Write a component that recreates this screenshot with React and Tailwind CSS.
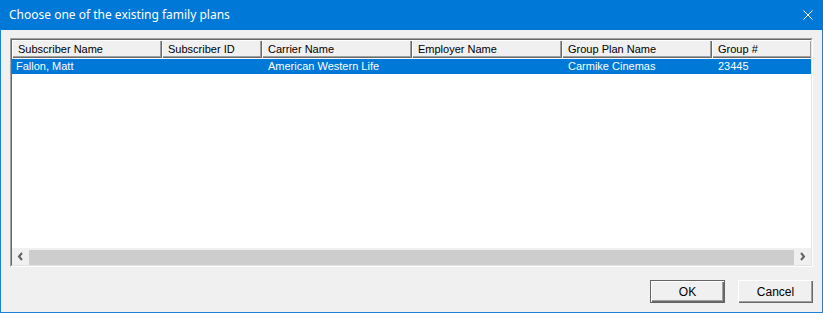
import React from "react";

const cols = [
  { name: "Subscriber Name", w: "w-[150px]" },
  { name: "Subscriber ID", w: "w-[100px]" },
  { name: "Carrier Name", w: "w-[150px]" },
  { name: "Employer Name", w: "w-[150px]" },
  { name: "Group Plan Name", w: "w-[150px]" },
  { name: "Group #", w: "w-[100px]" },
];

const row = ["Fallon, Matt", "", "American Western Life", "", "Carmike Cinemas", "23445"];

export default function App() {
  return (
    <div className="w-[823px] h-[313px] flex flex-col bg-[#f0f0f0] overflow-hidden" style={{ fontFamily: '"Liberation Sans", Arial, sans-serif' }}>
      {/* Title bar */}
      <div className="h-[30px] shrink-0 bg-[#0078d7] flex items-center justify-between pl-[9px] pr-[10px]">
        <span className="text-white text-[12px] leading-none pb-[1px]" style={{ fontFamily: '"Noto Sans", sans-serif' }}>
          Choose one of the existing family plans
        </span>
        <svg width="10" height="10" viewBox="0 0 10 10" className="mr-[0px]">
          <path d="M0.5 0.5 L9.5 9.5 M9.5 0.5 L0.5 9.5" stroke="white" strokeWidth="1" fill="none" />
        </svg>
      </div>

      {/* Body */}
      <div className="flex-1 flex flex-col border-x border-b border-[#1a82d6] pt-[8px] px-[9px] pb-[9px]">
        {/* List box sunken border */}
        <div className="h-[229px] border border-t-[#a0a0a0] border-l-[#a0a0a0] border-r-white border-b-white">
          <div className="h-full border border-t-[#696969] border-l-[#696969] border-r-[#e3e3e3] border-b-[#e3e3e3] bg-white flex flex-col overflow-hidden">
            {/* Header */}
            <div className="flex h-[18px] shrink-0 overflow-hidden">
              {cols.map((c) => (
                <div
                  key={c.name}
                  className={`${c.w} shrink-0 h-full bg-[#f0f0f0] text-[11px] text-black leading-[18px] pl-[6px] shadow-[inset_1px_1px_0_#ffffff,inset_-1px_-1px_0_#696969,inset_-2px_-2px_0_#a0a0a0]`}
                >
                  {c.name}
                </div>
              ))}
            </div>
            {/* Rows */}
            <div className="flex-1 pt-[1px]">
              <div className="flex h-[15px] bg-[#0078d7] text-white text-[11px] leading-[15px] overflow-hidden">
                {row.map((v, i) => (
                  <div key={i} className={`${cols[i].w} shrink-0 ${i === 0 ? "pl-[4px]" : "pl-[6px]"}`}>
                    {v}
                  </div>
                ))}
              </div>
            </div>
            {/* Horizontal scrollbar */}
            <div className="h-[17px] shrink-0 bg-[#f0f0f0] flex">
              <div className="w-[17px] h-full flex items-center justify-center">
                <svg width="7" height="9" viewBox="0 0 7 9">
                  <path d="M5 1 L2 4.5 L5 8" stroke="#606060" strokeWidth="2" fill="none" />
                </svg>
              </div>
              <div className="flex-1 h-full pt-[2px] pb-[0px]">
                <div className="h-full bg-[#cdcdcd]" />
              </div>
              <div className="w-[17px] h-full flex items-center justify-center">
                <svg width="7" height="9" viewBox="0 0 7 9">
                  <path d="M2 1 L5 4.5 L2 8" stroke="#606060" strokeWidth="2" fill="none" />
                </svg>
              </div>
            </div>
          </div>
        </div>

        {/* Buttons */}
        <div className="flex justify-end gap-[13px] mt-[13px] pr-[0px]">
          <button className="w-[75px] h-[23px] border border-[#646464] bg-[#f0f0f0] text-[12px] text-black shadow-[inset_1px_1px_0_#ffffff,inset_-1px_-1px_0_#696969,inset_-2px_-2px_0_#a0a0a0]">
            OK
          </button>
          <button className="w-[75px] h-[23px] bg-[#f0f0f0] text-[12px] text-black shadow-[inset_1px_1px_0_#ffffff,inset_-1px_-1px_0_#696969,inset_-2px_-2px_0_#a0a0a0]">
            Cancel
          </button>
        </div>
      </div>
    </div>
  );
}
